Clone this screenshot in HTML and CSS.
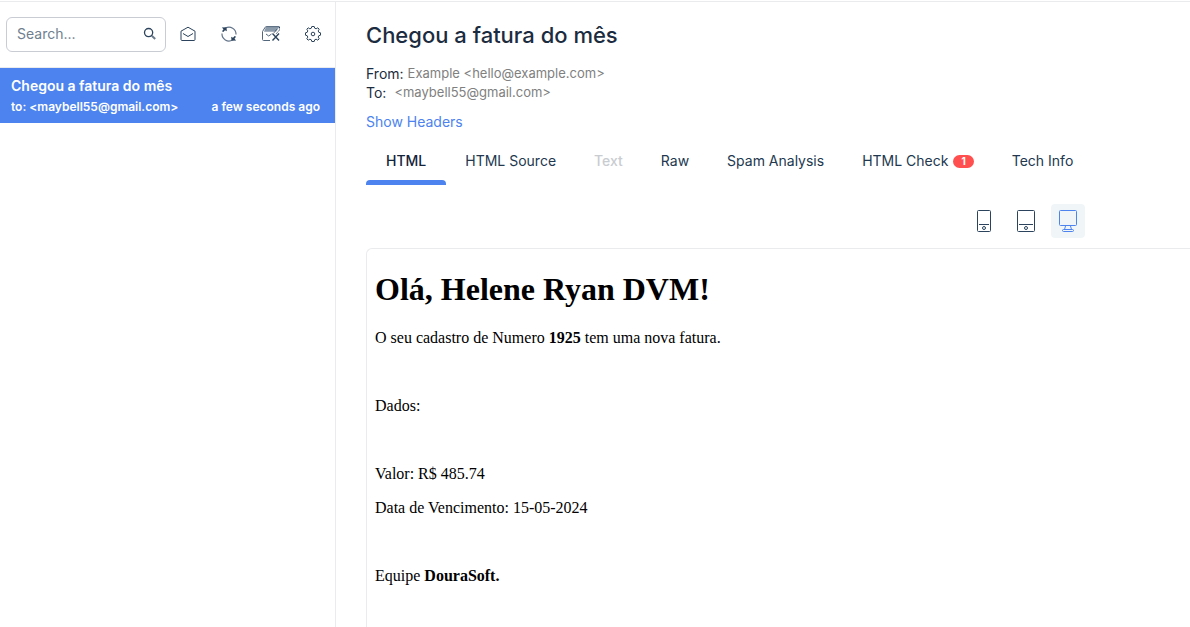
FILE: index.html
```html
<!DOCTYPE html>
<html lang="pt">
<head>
<meta charset="utf-8">
<meta name="viewport" content="width=device-width, initial-scale=1">
<title>Chegou a fatura do mês</title>
<link rel="stylesheet" href="styles.css">
</head>
<body>
<div class="app">
  <aside class="sidebar">
    <div class="toolbar">
      <label class="search">
        <input class="search-input" type="search" placeholder="Search..." aria-label="Search">
        <svg class="icon-search" width="14" height="14" viewBox="0 0 14 14" aria-hidden="true"><circle cx="5.6" cy="5.6" r="4.1"/><path d="M8.8 8.8l3.400 3.200" stroke="#6b7a8b" stroke-width="2"/></svg>
      </label>
      <div class="actions">
        <button class="action" type="button" aria-label="Mark all as read">
          <svg width="16" height="16" viewBox="0 0 16 16"><path d="M1 5.200L8 1.200l7 4v8.300c0 .6-.4 1-1 1H2c-.6 0-1-.4-1-1zM3 7.500l5 3L13 7.500"/></svg>
        </button>
        <button class="action" type="button" aria-label="Refresh">
          <svg width="16" height="16" viewBox="0 0 16 16"><g stroke="#63758a" stroke-width="1.200"><path d="M4.500 2.100A7 7 0 0 1 15 8.500M11.500 14A7 7 0 0 1 1 7.500"/></g><path class="solid" d="M.8 1.500l4.700-.3.300 4L4 4.300 2.300 6 1 5.300l1.500-2zM15.200 14.500l-4.700.3-.3-4 1.800.9L13.700 10l1.300.7-1.500 2z"/></svg>
        </button>
        <button class="action" type="button" aria-label="Empty inbox">
          <svg width="18" height="16" viewBox="0 0 18 16"><path class="shade" d="M2 5.800L4 .8h13.500l-3.500 5z"/><path d="M8 14.500H1.500c-.6 0-1-.4-1-1V5.500L3 1.500C3.300 1 3.600.6 4.200.6H17.500M4 8l2.700 2L9.500 8" stroke="#52667c"/><path d="M17.500 1v3L14 8M14.500 3.500l-3 4" stroke-dasharray="1.500 1"/><path d="M10.500 7.500l6.500 7M17 7.500l-6.500 7" stroke-width="1.400"/></svg>
        </button>
        <button class="action" type="button" aria-label="Settings">
          <svg width="16" height="16" viewBox="1 1 16 16"><path d="M7.300 3.200L7.800 1.500h2.400l.5 1.700 1.400.6 1.700-1 1.400 1.400-1 1.700.6 1.400 1.700.5v2.400l-1.700.5-.6 1.400 1 1.700-1.400 1.400-1.700-1-1.400.6-.5 1.700H7.800l-.5-1.700-1.400-.6-1.700 1-1.400-1.400 1-1.700-.6-1.400-1.700-.5V7.800l1.700-.5.6-1.400-1-1.700 1.400-1.400 1.700 1z" stroke-linejoin="round"/><circle cx="9" cy="9" r="1.800"/></svg>
        </button>
      </div>
    </div>
    <a class="mail" href="#message">
      <span class="mail-subject">Chegou a fatura do mês</span>
      <span class="mail-meta"><span>to: &lt;maybell55@gmail.com&gt;</span><time>a few seconds ago</time></span>
    </a>
  </aside>

  <main class="message" id="message">
    <header class="message-head">
      <h1 class="subject">Chegou a fatura do mês</h1>
      <p class="address"><span class="address-label">From:</span><span class="address-from">Example &lt;hello@example.com&gt;</span></p>
      <p class="address"><span class="address-label">To:</span><span class="address-to">&lt;maybell55@gmail.com&gt;</span></p>
      <a class="show-headers" href="#headers">Show Headers</a>
    </header>
    <nav class="tabs" aria-label="Message views">
      <button class="tab tab-active" type="button">HTML</button>
      <button class="tab" type="button">HTML Source</button>
      <button class="tab" type="button" disabled>Text</button>
      <button class="tab" type="button">Raw</button>
      <button class="tab" type="button">Spam Analysis</button>
      <button class="tab" type="button">HTML Check<span class="badge">1</span></button>
      <button class="tab" type="button">Tech Info</button>
    </nav>
    <div class="devices">
      <button class="device" type="button" aria-label="Mobile view">
        <svg width="14" height="22" viewBox="0 0 14 22"><rect x=".5" y=".5" width="13" height="21" rx="1"/><path d="M2 14.500h10"/><circle cx="7" cy="18" r="1.500"/></svg>
      </button>
      <button class="device" type="button" aria-label="Tablet view">
        <svg width="18" height="22" viewBox="0 0 18 22"><rect x=".5" y=".5" width="17" height="21" rx="1"/><path d="M2 14.500h14"/><circle cx="9" cy="18" r="1.500"/></svg>
      </button>
      <button class="device device-active" type="button" aria-label="Desktop view">
        <svg width="18" height="22" viewBox="0 0 18 22"><rect x=".5" y=".5" width="17" height="15" rx="1"/><path d="M6.500 16l-1 3.500M11.500 16l1 3.500"/><rect x="3.500" y="19.500" width="11" height="2" rx="1"/></svg>
      </button>
    </div>
    <article class="preview">
      <h1>Olá, Helene Ryan DVM!</h1>
      <p>O seu cadastro de Numero <strong>1925</strong> tem uma nova fatura.</p>
      <p>&nbsp;</p>
      <p>Dados:</p>
      <p>&nbsp;</p>
      <p>Valor: R$ 485.74</p>
      <p>Data de Vencimento: 15-05-2024</p>
      <p>&nbsp;</p>
      <p>Equipe <strong>DouraSoft.</strong></p>
    </article>
  </main>
</div>
</body>
</html>
```
FILE: styles.css
```css
* {
  box-sizing: border-box;
}

body {
  margin: 0;
  padding-top: 1px;
  height: 100vh;
  overflow: hidden;
  background: #fff;
  color: #1c2c40;
  font: 14px/20px Inter, "Liberation Sans", sans-serif;
}

button {
  font: inherit;
  color: inherit;
  background: none;
  border: 0;
  padding: 0;
}

a {
  text-decoration: none;
}

svg {
  display: block;
  fill: none;
  stroke: #2b435c;
  stroke-width: 1;
}

.app {
  display: flex;
  height: 100%;
  border-top: 1px solid #eaebec;
}

.sidebar {
  flex: 0 0 336px;
  border-right: 1px solid #eaebec;
}

.toolbar {
  display: flex;
  align-items: center;
  gap: 14px;
  padding: 15px 14px 15px 6px;
  border-bottom: 1px solid #eaebec;
}

.search {
  display: flex;
  align-items: center;
  width: 160px;
  height: 35px;
  padding: 0 8px 2px 10px;
  border: 1px solid #c9ccd3;
  border-radius: 6px;
}

.search-input {
  flex: 1;
  min-width: 0;
  padding: 0;
  border: 0;
  outline: 0;
  background: none;
  color: inherit;
  font: inherit;
}

.search-input::placeholder {
  color: #6f7f8f;
  opacity: 1;
}

.icon-search {
  stroke-width: 1.3;
}

.actions {
  display: flex;
  flex: 1;
  align-items: center;
  justify-content: space-between;
  padding-bottom: 2px;
}

.action .solid {
  fill: #2b435c;
  stroke: none;
}

.action .shade {
  fill: #8c9bab;
  stroke: none;
}

.mail {
  display: block;
  padding: 8px 15px 6px 11px;
  background: #4c83ee;
  color: #fff;
  font-weight: 600;
}

.mail-subject {
  display: block;
}

.mail-meta {
  display: flex;
  justify-content: space-between;
  padding-top: 1px;
  font-size: 12px;
}

.message {
  display: flex;
  flex: 1;
  flex-direction: column;
  min-width: 0;
  padding: 18px 0 0 30px;
}

.subject {
  margin: 0 0 14px;
  font-size: 22px;
  line-height: 30px;
  font-weight: 500;
}

.address {
  display: flex;
  gap: 4px;
  margin: 0;
  line-height: 19px;
}

.address-from,
.address-to {
  color: #808080;
  font-size: 13px;
}

.address-to {
  padding-left: 4px;
}

.show-headers {
  display: block;
  margin-top: 10px;
  color: #4c83ee;
}

.tabs {
  display: flex;
  margin-top: 5px;
}

.tab {
  display: flex;
  align-items: center;
  gap: 5px;
  height: 48px;
  padding: 0 19px;
  color: #22384f;
  white-space: nowrap;
}

.tab:disabled {
  color: #c9ccd1;
  font-weight: 500;
}

.tab-active {
  position: relative;
  padding: 0 20px;
  color: #14233a;
  font-weight: 500;
}

.tab-active::after {
  content: "";
  position: absolute;
  inset: auto 0 0;
  height: 5px;
  border-radius: 4px 4px 0 0;
  background: #4c83ee;
}

.badge {
  padding: 0 8px;
  border-radius: 7px;
  background: #ff4f4f;
  color: #fff;
  font-size: 10px;
  line-height: 13px;
  font-weight: 700;
}

.devices {
  display: flex;
  justify-content: flex-end;
  gap: 8px;
  margin: 19px 105px 10px 0;
}

.device {
  display: grid;
  place-items: center;
  width: 34px;
  height: 34px;
  border-radius: 4px;
}

.device-active {
  background: #f0f6f7;
}

.device-active svg {
  stroke: #4c83ee;
}

.preview {
  flex: 1 0 auto;
  padding: 0 8px 42px;
  border: solid #eaebec;
  border-width: 1px 0 0 1px;
  border-radius: 6px 0 0;
  color: #000;
  font: 16px/18px "Liberation Serif", serif;
}

.preview h1 {
  margin: 22px 0 21px;
  font-size: 32px;
  line-height: 37px;
}

.preview p {
  margin: 16px 0;
}
```
